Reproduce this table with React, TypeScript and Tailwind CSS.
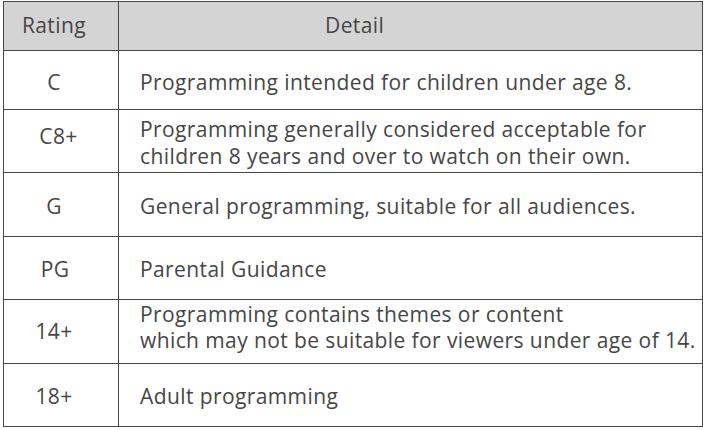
import React from "react";

type Row = {
  r: string;
  d: string[];
  h: string;
  rp: string;
  dp: string;
  lh: string;
  rx: string;
};

const rows: Row[] = [
  {
    r: "C",
    d: ["Programming intended for children under age 8."],
    h: "h-[59px]",
    rp: "pt-[17px]",
    dp: "pt-[17px]",
    lh: "leading-[28px]",
    rx: "pr-[14px]",
  },
  {
    r: "C8+",
    d: [
      "Programming generally considered acceptable for",
      "children 8 years and over to watch on their own.",
    ],
    h: "h-[63px]",
    rp: "pt-[12px]",
    dp: "pt-[6px]",
    lh: "leading-[27px]",
    rx: "pr-[5px]",
  },
  {
    r: "G",
    d: ["General programming, suitable for all audiences."],
    h: "h-[64px]",
    rp: "pt-[19px]",
    dp: "pt-[19px]",
    lh: "leading-[28px]",
    rx: "pr-[14px]",
  },
  {
    r: "PG",
    d: ["Parental Guidance"],
    h: "h-[63px]",
    rp: "pt-[18px]",
    dp: "pt-[18px]",
    lh: "leading-[28px]",
    rx: "pr-[12px]",
  },
  {
    r: "14+",
    d: [
      "Programming contains themes or content",
      "which may not be suitable for viewers under age of 14.",
    ],
    h: "h-[64px]",
    rp: "pt-[17px]",
    dp: "pt-[1px]",
    lh: "leading-[26px]",
    rx: "pr-[14px]",
  },
  {
    r: "18+",
    d: ["Adult programming"],
    h: "h-[62px]",
    rp: "pt-[18px]",
    dp: "pt-[18px]",
    lh: "leading-[28px]",
    rx: "pr-[14px]",
  },
];

export default function App() {
  return (
    <div
      className="w-[706px] h-[430px] bg-white pt-[1px] pl-[3px] text-[#464646]"
      style={{ fontFamily: '"Open Sans", "Noto Sans", sans-serif' }}
    >
      <div className="w-[700px] border border-[#474747] text-[21px] tracking-[0.4px]">
        <div className="grid grid-cols-[115px_1fr] h-[49px] bg-[#d4d4d4] border-b border-[#474747] leading-[28px]">
          <div className="flex justify-center pt-[9px] pr-[14px] border-r border-[#474747]">Rating</div>
          <div className="pt-[9px] pl-[206px]">Detail</div>
        </div>
        {rows.map((row, i) => (
          <div
            key={row.r}
            className={`grid grid-cols-[115px_1fr] ${row.h} ${
              i < rows.length - 1 ? "border-b border-[#474747]" : ""
            }`}
          >
            <div
              className={`flex justify-center leading-[28px] border-r border-[#474747] ${row.rp} ${row.rx}`}
            >
              {row.r}
            </div>
            <div className={`pl-[21px] ${row.lh} ${row.dp}`}>
              {row.d.map((l) => (
                <div key={l} className="whitespace-nowrap">
                  {l}
                </div>
              ))}
            </div>
          </div>
        ))}
      </div>
    </div>
  );
}
